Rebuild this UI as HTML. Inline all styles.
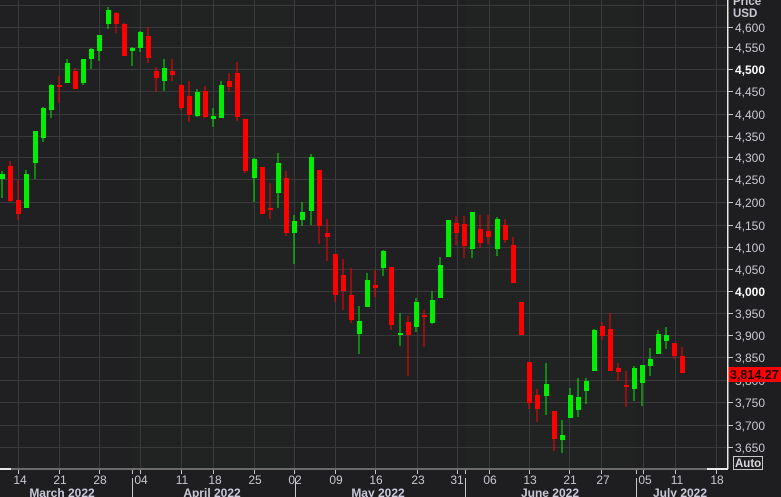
<!DOCTYPE html>
<html><head><meta charset="utf-8"><style>
html,body{margin:0;padding:0;background:#1e1e20;}
svg{display:block;font-family:"Liberation Sans",Arial,sans-serif;}
</style></head><body>
<svg width="781" height="497" viewBox="0 0 781 497" xmlns="http://www.w3.org/2000/svg">
<rect x="0" y="0" width="781" height="497" fill="#1e1e20"/>
<rect x="0" y="0" width="727" height="469" fill="#202022"/>
<rect x="132" y="0" width="163" height="469" fill="#212322"/>
<rect x="465" y="0" width="171" height="469" fill="#212322"/>
<g stroke="#3a3a3c" stroke-width="1">
<path d="M18.5 0V469M59.5 0V469M99.5 0V469M140.5 0V469M181.5 0V469M213.5 0V469M254.5 0V469M294.5 0V469M335.5 0V469M375.5 0V469M417.5 0V469M457.5 0V469M489.5 0V469M529.5 0V469M569.5 0V469M601.5 0V469M643.5 0V469M675.5 0V469M716.5 0V469"/>
<path d="M0 5.5H727M0 27.5H727M0 47.5H727M0 69.5H727M0 91.5H727M0 114.5H727M0 136.5H727M0 157.5H727M0 179.5H727M0 202.5H727M0 225.5H727M0 247.5H727M0 269.5H727M0 291.5H727M0 313.5H727M0 335.5H727M0 357.5H727M0 380.5H727M0 402.5H727M0 425.5H727M0 447.5H727"/>
</g>
<g id="c">
<!-- green -->
<g fill="#00ee00">
<rect x="1.5" y="171" width="1" height="27"/><rect x="0" y="174" width="5" height="5"/>
<rect x="25.5" y="170" width="1" height="38"/><rect x="24" y="174" width="5" height="34"/>
<rect x="34.5" y="131" width="1" height="48"/><rect x="33" y="131" width="5" height="32"/>
<rect x="42.5" y="107" width="1" height="35"/><rect x="41" y="108" width="5" height="30"/>
<rect x="50.5" y="84" width="1" height="34"/><rect x="49" y="85" width="5" height="25"/>
<rect x="66.5" y="59" width="1" height="24"/><rect x="65" y="63" width="5" height="20"/>
<rect x="82.5" y="59" width="1" height="26"/><rect x="81" y="59" width="5" height="24"/>
<rect x="90.5" y="48" width="1" height="21"/><rect x="89" y="49" width="5" height="10"/>
<rect x="98.5" y="35" width="1" height="26"/><rect x="97" y="35" width="5" height="16"/>
<rect x="107.5" y="7" width="1" height="22"/><rect x="106" y="10" width="5" height="14"/>
<rect x="131.5" y="47" width="1" height="19"/><rect x="130" y="48" width="5" height="3"/>
<rect x="139.5" y="31" width="1" height="21"/><rect x="138" y="32" width="5" height="16"/>
<rect x="163.5" y="59" width="1" height="32"/><rect x="162" y="68" width="5" height="13"/>
<rect x="196.5" y="89" width="1" height="28"/><rect x="195" y="92" width="5" height="24"/>
<rect x="212.5" y="108" width="1" height="19"/><rect x="211" y="116" width="5" height="3"/>
<rect x="220.5" y="81" width="1" height="37"/><rect x="219" y="85" width="5" height="33"/>
<rect x="253.5" y="158" width="1" height="44"/><rect x="252" y="159" width="5" height="19"/>
<rect x="277.5" y="153" width="1" height="55"/><rect x="276" y="163" width="5" height="30"/>
<rect x="293.5" y="215" width="1" height="49"/><rect x="292" y="221" width="5" height="12"/>
<rect x="301.5" y="202" width="1" height="24"/><rect x="300" y="212" width="5" height="8"/>
<rect x="310.5" y="154" width="1" height="71"/><rect x="309" y="157" width="5" height="54"/>
<rect x="358.5" y="306" width="1" height="48"/><rect x="357" y="321" width="5" height="13"/>
<rect x="366.5" y="273" width="1" height="34"/><rect x="365" y="280" width="5" height="27"/>
<rect x="382.5" y="250" width="1" height="26"/><rect x="381" y="251" width="5" height="17"/>
<rect x="399.5" y="313" width="1" height="33"/><rect x="398" y="333" width="5" height="2"/>
<rect x="415.5" y="298" width="1" height="34"/><rect x="414" y="302" width="5" height="25"/>
<rect x="431.5" y="291" width="1" height="33"/><rect x="430" y="300" width="5" height="23"/>
<rect x="439.5" y="257" width="1" height="41"/><rect x="438" y="265" width="5" height="33"/>
<rect x="447.5" y="220" width="1" height="37"/><rect x="446" y="220" width="5" height="37"/>
<rect x="471.5" y="212" width="1" height="46"/><rect x="470" y="212" width="5" height="37"/>
<rect x="496.5" y="217" width="1" height="39"/><rect x="495" y="219" width="5" height="30"/>
<rect x="545.5" y="363" width="1" height="52"/><rect x="544" y="384" width="5" height="12"/>
<rect x="561.5" y="420" width="1" height="33"/><rect x="560" y="435" width="5" height="5"/>
<rect x="569.5" y="388" width="1" height="30"/><rect x="568" y="395" width="5" height="23"/>
<rect x="577.5" y="378" width="1" height="39"/><rect x="576" y="397" width="5" height="13"/>
<rect x="585.5" y="378" width="1" height="26"/><rect x="584" y="381" width="5" height="10"/>
<rect x="593.5" y="329" width="1" height="42"/><rect x="592" y="330" width="5" height="41"/>
<rect x="633.5" y="366" width="1" height="35"/><rect x="632" y="368" width="5" height="21"/>
<rect x="641.5" y="365" width="1" height="41"/><rect x="640" y="365" width="5" height="18"/>
<rect x="649.5" y="348" width="1" height="28"/><rect x="648" y="359" width="5" height="7"/>
<rect x="657.5" y="330" width="1" height="24"/><rect x="656" y="334" width="5" height="20"/>
<rect x="665.5" y="327" width="1" height="22"/><rect x="664" y="335" width="5" height="6"/>
</g>
<g fill="#ff0000">
<rect x="9.5" y="161" width="1" height="41"/><rect x="8" y="166" width="5" height="35"/>
<rect x="17.5" y="180" width="1" height="40"/><rect x="16" y="200" width="5" height="14"/>
<rect x="58.5" y="76" width="1" height="27"/><rect x="57" y="85" width="5" height="2"/>
<rect x="74.5" y="68" width="1" height="21"/><rect x="73" y="71" width="5" height="18"/>
<rect x="115.5" y="12" width="1" height="21"/><rect x="114" y="13" width="5" height="11"/>
<rect x="123.5" y="23" width="1" height="33"/><rect x="122" y="24" width="5" height="32"/>
<rect x="147.5" y="27" width="1" height="36"/><rect x="146" y="36" width="5" height="22"/>
<rect x="155.5" y="67" width="1" height="25"/><rect x="154" y="71" width="5" height="7"/>
<rect x="171.5" y="59" width="1" height="22"/><rect x="170" y="71" width="5" height="4"/>
<rect x="180.5" y="84" width="1" height="26"/><rect x="179" y="85" width="5" height="23"/>
<rect x="188.5" y="81" width="1" height="41"/><rect x="187" y="96" width="5" height="19"/>
<rect x="204.5" y="86" width="1" height="32"/><rect x="203" y="91" width="5" height="26"/>
<rect x="228.5" y="73" width="1" height="19"/><rect x="227" y="81" width="5" height="6"/>
<rect x="236.5" y="62" width="1" height="59"/><rect x="235" y="73" width="5" height="44"/>
<rect x="244.5" y="119" width="1" height="54"/><rect x="243" y="119" width="5" height="52"/>
<rect x="261.5" y="167" width="1" height="47"/><rect x="260" y="167" width="5" height="47"/>
<rect x="269.5" y="183" width="1" height="36"/><rect x="268" y="208" width="5" height="2"/>
<rect x="285.5" y="171" width="1" height="65"/><rect x="284" y="178" width="5" height="55"/>
<rect x="318.5" y="170" width="1" height="74"/><rect x="317" y="170" width="5" height="56"/>
<rect x="326.5" y="219" width="1" height="42"/><rect x="325" y="233" width="5" height="4"/>
<rect x="334.5" y="254" width="1" height="48"/><rect x="333" y="254" width="5" height="41"/>
<rect x="342.5" y="259" width="1" height="51"/><rect x="341" y="275" width="5" height="16"/>
<rect x="350.5" y="268" width="1" height="55"/><rect x="349" y="295" width="5" height="25"/>
<rect x="374.5" y="270" width="1" height="27"/><rect x="373" y="285" width="5" height="3"/>
<rect x="390.5" y="267" width="1" height="63"/><rect x="389" y="267" width="5" height="58"/>
<rect x="407.5" y="316" width="1" height="60"/><rect x="406" y="322" width="5" height="13"/>
<rect x="423.5" y="310" width="1" height="37"/><rect x="422" y="315" width="5" height="2"/>
<rect x="455.5" y="216" width="1" height="29"/><rect x="454" y="223" width="5" height="10"/>
<rect x="463.5" y="216" width="1" height="42"/><rect x="462" y="224" width="5" height="22"/>
<rect x="479.5" y="215" width="1" height="33"/><rect x="478" y="229" width="5" height="14"/>
<rect x="487.5" y="215" width="1" height="29"/><rect x="486" y="231" width="5" height="6"/>
<rect x="504.5" y="219" width="1" height="24"/><rect x="503" y="225" width="5" height="15"/>
<rect x="512.5" y="237" width="1" height="46"/><rect x="511" y="245" width="5" height="38"/>
<rect x="520.5" y="302" width="1" height="33"/><rect x="519" y="302" width="5" height="33"/>
<rect x="528.5" y="362" width="1" height="47"/><rect x="527" y="362" width="5" height="41"/>
<rect x="536.5" y="389" width="1" height="33"/><rect x="535" y="395" width="5" height="14"/>
<rect x="553.5" y="411" width="1" height="40"/><rect x="552" y="411" width="5" height="28"/>
<rect x="601.5" y="322" width="1" height="18"/><rect x="600" y="326" width="5" height="10"/>
<rect x="609.5" y="313" width="1" height="58"/><rect x="608" y="329" width="5" height="42"/>
<rect x="617.5" y="363" width="1" height="18"/><rect x="616" y="368" width="5" height="4"/>
<rect x="625.5" y="371" width="1" height="36"/><rect x="624" y="385" width="5" height="2"/>
<rect x="673.5" y="343" width="1" height="16"/><rect x="672" y="343" width="5" height="13"/>
<rect x="681.5" y="347" width="1" height="26"/><rect x="680" y="356" width="5" height="17"/>
</g>
</g>
<!-- axes -->
<rect x="727" y="0" width="1.5" height="469" fill="#e8e8e8"/>
<rect x="0" y="468" width="727" height="2" fill="#6a6a6a"/>
<rect x="0" y="468" width="11" height="2" fill="#e8e8e8"/>
<rect x="707" y="468" width="21" height="2" fill="#e8e8e8"/>
<g stroke="#c8c8c8" stroke-width="1">
<path d="M728 27.5h5M728 47.5h5M728 69.5h5M728 91.5h5M728 114.5h5M728 136.5h5M728 157.5h5M728 179.5h5M728 202.5h5M728 225.5h5M728 247.5h5M728 269.5h5M728 291.5h5M728 313.5h5M728 335.5h5M728 357.5h5M728 402.5h5M728 425.5h5M728 447.5h5"/>
<path d="M18.5 470v4M59.5 470v4M99.5 470v4M132.5 470v4M140.5 470v4M181.5 470v4M213.5 470v4M254.5 470v4M294.5 470v4M335.5 470v4M375.5 470v4M417.5 470v4M457.5 470v4M465.5 470v4M489.5 470v4M529.5 470v4M569.5 470v4M601.5 470v4M636.5 470v4M643.5 470v4M675.5 470v4M716.5 470v4"/>
<path d="M132.5 478v19M295.5 478v19M465.5 478v19M636.5 478v19"/>
</g>
<g fill="#c8c8d2" font-size="12">
<text x="733" y="5" font-weight="bold" font-size="11.5">Price</text>
<text x="733" y="17" font-weight="bold" font-size="11.5">USD</text>
<text x="735" y="32">4,600</text>
<text x="735" y="52">4,550</text>
<text x="735" y="74" font-weight="bold" fill="#ffffff">4,500</text>
<text x="735" y="96">4,450</text>
<text x="735" y="119">4,400</text>
<text x="735" y="141">4,350</text>
<text x="735" y="162">4,300</text>
<text x="735" y="184">4,250</text>
<text x="735" y="207">4,200</text>
<text x="735" y="230">4,150</text>
<text x="735" y="252">4,100</text>
<text x="735" y="274">4,050</text>
<text x="735" y="296" font-weight="bold" fill="#ffffff">4,000</text>
<text x="735" y="318">3,950</text>
<text x="735" y="340">3,900</text>
<text x="735" y="362">3,850</text>
<text x="735" y="385">3,800</text>
<text x="735" y="407">3,750</text>
<text x="735" y="430">3,700</text>
<text x="735" y="452">3,650</text>
</g>
<rect x="728.5" y="367" width="52.5" height="15" fill="#ff0000"/>
<text x="730" y="379" font-size="12.5" font-weight="bold" fill="#1a0000">3,814.27</text>
<rect x="733.5" y="456.5" width="29" height="13" fill="none" stroke="#c8c8c8"/>
<text x="735" y="467" font-size="11.5" font-weight="bold" fill="#d8d8e0">Auto</text>
<g fill="#c8c8d2" font-size="12" text-anchor="middle">
<text x="20" y="484">14</text><text x="60" y="484">21</text><text x="100" y="484">28</text>
<text x="141" y="484">04</text><text x="182" y="484">11</text><text x="215" y="484">18</text>
<text x="255" y="484">25</text><text x="295" y="484">02</text><text x="336" y="484">09</text>
<text x="376" y="484">16</text><text x="418" y="484">23</text><text x="457" y="484">31</text>
<text x="490" y="484">06</text><text x="530" y="484">13</text><text x="570" y="484">21</text>
<text x="603" y="484">27</text><text x="645" y="484">05</text><text x="677" y="484">11</text>
<text x="717" y="484">18</text>
</g>
<g fill="#c8c8d8" font-size="12" font-weight="bold" text-anchor="middle">
<text x="62" y="497">March 2022</text>
<text x="212" y="497">April 2022</text>
<text x="378" y="497">May 2022</text>
<text x="550" y="497">June 2022</text>
<text x="680" y="497">July 2022</text>
</g>
</svg>
</body></html>
